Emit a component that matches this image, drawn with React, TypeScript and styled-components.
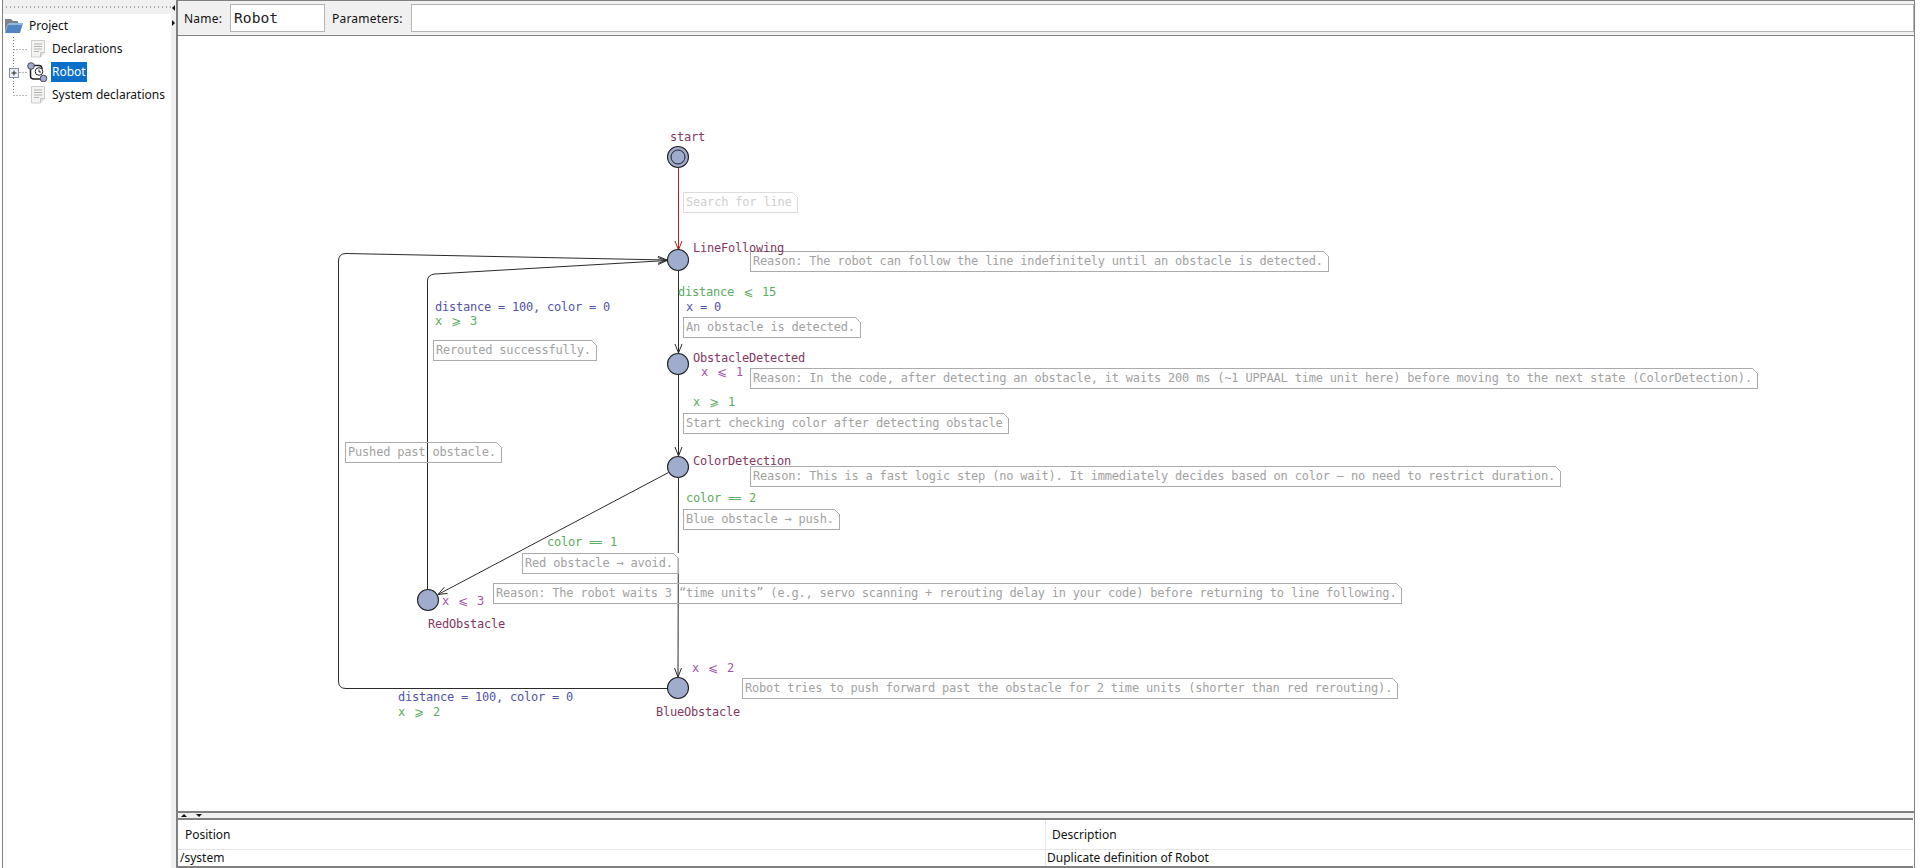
import styled, { createGlobalStyle } from "styled-components";

const FRAME = "#808080";
const PANEL = "#f0f0f0";
const UI_FONT = '"Noto Sans", "Open Sans", sans-serif';
const MONO_FONT = '"DejaVu Sans Mono", "Liberation Mono", monospace';

const CANVAS_X = 178;
const CANVAS_Y = 36;
const CANVAS_W = 1736;
const CANVAS_H = 775;

type Tone = "name" | "guard" | "update" | "invariant";

const TONES: Record<Tone, string> = {
  name: "#83395f",
  guard: "#5dab60",
  update: "#5353a8",
  invariant: "#a354a8",
};

const LOCATIONS = [
  { x: 678, y: 157 },
  { x: 678, y: 260 },
  { x: 678, y: 364 },
  { x: 678, y: 467 },
  { x: 428, y: 600 },
  { x: 678, y: 688 },
];

const LABELS: { x: number; y: number; tone: Tone; text: string }[] = [
  { x: 670, y: 137, tone: "name", text: "start" },
  { x: 693, y: 248, tone: "name", text: "LineFollowing" },
  { x: 693, y: 358, tone: "name", text: "ObstacleDetected" },
  { x: 693, y: 461, tone: "name", text: "ColorDetection" },
  { x: 428, y: 624, tone: "name", text: "RedObstacle" },
  { x: 656, y: 712, tone: "name", text: "BlueObstacle" },
  { x: 678, y: 292, tone: "guard", text: "distance ⩽ 15" },
  { x: 686, y: 307, tone: "update", text: "x = 0" },
  { x: 701, y: 372, tone: "invariant", text: "x ⩽ 1" },
  { x: 693, y: 402, tone: "guard", text: "x ⩾ 1" },
  { x: 686, y: 498, tone: "guard", text: "color == 2" },
  { x: 547, y: 542, tone: "guard", text: "color == 1" },
  { x: 442, y: 601, tone: "invariant", text: "x ⩽ 3" },
  { x: 692, y: 668, tone: "invariant", text: "x ⩽ 2" },
  { x: 435, y: 307, tone: "update", text: "distance = 100, color = 0" },
  { x: 435, y: 321, tone: "guard", text: "x ⩾ 3" },
  { x: 398, y: 697, tone: "update", text: "distance = 100, color = 0" },
  { x: 398, y: 712, tone: "guard", text: "x ⩾ 2" },
];

const NOTES: { x: number; y: number; faint?: boolean; text: string }[] = [
  { x: 683, y: 192, faint: true, text: "Search for line" },
  { x: 750, y: 251, text: "Reason: The robot can follow the line indefinitely until an obstacle is detected." },
  { x: 683, y: 317, text: "An obstacle is detected." },
  { x: 750, y: 368, text: "Reason: In the code, after detecting an obstacle, it waits 200 ms (~1 UPPAAL time unit here) before moving to the next state (ColorDetection)." },
  { x: 683, y: 413, text: "Start checking color after detecting obstacle" },
  { x: 750, y: 466, text: "Reason: This is a fast logic step (no wait). It immediately decides based on color — no need to restrict duration." },
  { x: 683, y: 509, text: "Blue obstacle → push." },
  { x: 522, y: 553, text: "Red obstacle → avoid." },
  { x: 493, y: 583, text: "Reason: The robot waits 3 “time units” (e.g., servo scanning + rerouting delay in your code) before returning to line following." },
  { x: 742, y: 678, text: "Robot tries to push forward past the obstacle for 2 time units (shorter than red rerouting)." },
  { x: 433, y: 340, text: "Rerouted successfully." },
  { x: 345, y: 442, text: "Pushed past obstacle." },
];

const EDGES: { d: string; tip: [number, number]; from: [number, number]; color?: string }[] = [
  { d: "M678.5 168V250", tip: [678.5, 250], from: [678.5, 168], color: "#b02222" },
  { d: "M678.5 271V353", tip: [678.5, 353], from: [678.5, 271] },
  { d: "M678.5 374V456", tip: [678.5, 456], from: [678.5, 374] },
  { d: "M678.5 477L678 677", tip: [678, 677], from: [678.5, 477] },
  { d: "M668.5 472.5L438 594.5", tip: [438, 594.5], from: [668.5, 472.5] },
  { d: "M427.5 590V281Q427.5 274.5 435 274L667 260.5", tip: [667, 260.5], from: [435, 274] },
  { d: "M667 688.5H346Q338.5 688.5 338.5 681V261Q338.5 253.5 346 253.5L667 260", tip: [667, 260], from: [346, 253.5] },
];

const GlobalStyle = createGlobalStyle`
  html, body {
    margin: 0;
    background: #fff;
    overflow: hidden;
  }
`;

const Shell = styled.div`
  display: flex;
  width: 1920px;
  height: 868px;
  padding: 0 5px 0 2px;
  box-sizing: border-box;
  font-family: ${UI_FONT};
  font-size: 12px;
  color: #111;
`;

const TreePane = styled.aside`
  width: 168px;
  border-left: 1px solid ${FRAME};
  flex: none;
`;

const DragStrip = styled.div`
  height: 14px;
  background-color: ${PANEL};
  background-image: repeating-linear-gradient(to right, #a8a8a8 0 1px, transparent 1px 4px);
  background-size: 100% 2px;
  background-position: 3px 6px;
  background-repeat: no-repeat;
`;

const TreeRow = styled.div`
  display: flex;
  align-items: center;
  height: 23px;
`;

const RootIcon = styled.svg`
  margin: 0 4px 0 1px;
  flex: none;
`;

const Guide = styled.svg`
  flex: none;
`;

const DocGlyph = styled.svg`
  flex: none;
  margin-right: 5px;
`;

const TemplateGlyph = styled.svg`
  flex: none;
  margin: 0 3px 0 -3px;
`;

const TreeLabel = styled.span<{ $selected?: boolean }>`
  padding: 0 1px;
  line-height: 20px;
  background: ${(p) => (p.$selected ? "#0a6fc8" : "transparent")};
  color: ${(p) => (p.$selected ? "#fff" : "#111")};
`;

const Splitter = styled.div`
  position: relative;
  width: 5px;
  flex: none;
  background: ${PANEL};
`;

const Nub = styled.i<{ $top: number; $dir: "left" | "right" }>`
  position: absolute;
  top: ${(p) => p.$top}px;
  left: 1px;
  width: 0;
  height: 0;
  border-top: 3px solid transparent;
  border-bottom: 3px solid transparent;
  border-${(p) => (p.$dir === "left" ? "right" : "left")}: 3px solid #111;
`;

const Workspace = styled.main`
  flex: 1;
  min-width: 0;
  display: flex;
  flex-direction: column;
  border-left: 2px solid ${FRAME};
  border-right: 1px solid ${FRAME};
`;

const Toolbar = styled.div`
  display: flex;
  align-items: center;
  height: 34px;
  flex: none;
  border-top: 1px solid ${FRAME};
  border-bottom: 1px solid ${FRAME};
  background: ${PANEL};
  padding: 0 0 0 6px;
`;

const FieldLabel = styled.label`
  letter-spacing: 0.2px;
`;

const FieldBox = styled.div<{ $grow?: boolean }>`
  box-sizing: border-box;
  height: 28px;
  width: ${(p) => (p.$grow ? "auto" : "95px")};
  flex: ${(p) => (p.$grow ? 1 : "none")};
  margin: 0 ${(p) => (p.$grow ? "0" : "7px")} 0 8px;
  padding-left: 3px;
  background: #fff;
  border: 1px solid #b4b4b4;
  font-family: ${MONO_FONT};
  font-size: 14.6px;
  line-height: 25px;
  color: #222;
`;

const Canvas = styled.section`
  position: relative;
  flex: 1;
  min-height: 0;
  background: #fff;
  overflow: hidden;
  border-bottom: 2px solid ${FRAME};
`;

const Wires = styled.svg`
  position: absolute;
  top: 0;
  left: 0;
`;

const Label = styled.span<{ $x: number; $y: number; $tone: Tone }>`
  position: absolute;
  left: ${(p) => p.$x - CANVAS_X}px;
  top: ${(p) => p.$y - CANVAS_Y - 7}px;
  font-family: ${MONO_FONT};
  font-size: 12px;
  letter-spacing: -0.22px;
  line-height: 14px;
  white-space: pre;
  color: ${(p) => TONES[p.$tone]};
`;

const Relation = styled.span`
  display: inline-block;
  width: 14px;
  text-align: center;
  font-family: "DejaVu Sans", sans-serif;
`;

const DoubleEquals = styled.span`
  display: inline-block;
  width: 14px;
  letter-spacing: -1px;
`;

const Note = styled.div<{ $x: number; $y: number; $faint?: boolean }>`
  position: absolute;
  left: ${(p) => p.$x - CANVAS_X}px;
  top: ${(p) => p.$y - CANVAS_Y}px;
  box-sizing: border-box;
  height: 21px;
  padding: 0 5px 0 2px;
  border: 1px solid ${(p) => (p.$faint ? "#dcdcdc" : "#ababab")};
  font-family: ${MONO_FONT};
  font-size: 12px;
  letter-spacing: -0.19px;
  line-height: 19px;
  white-space: pre;
  color: ${(p) => (p.$faint ? "#cfcfcf" : "#a2a2a2")};

  &::after {
    content: "";
    position: absolute;
    top: -1px;
    right: -1px;
    width: 6px;
    height: 6px;
    background: linear-gradient(
      to top right,
      transparent 44%,
      ${(p) => (p.$faint ? "#dcdcdc" : "#ababab")} 44% 56%,
      #fff 56%
    );
  }
`;

const ResizeBar = styled.div`
  position: relative;
  height: 5px;
  flex: none;
  background: ${PANEL};
`;

const Caret = styled.i<{ $left: number; $up?: boolean }>`
  position: absolute;
  left: ${(p) => p.$left}px;
  top: 1px;
  width: 0;
  height: 0;
  border-left: 3.5px solid transparent;
  border-right: 3.5px solid transparent;
  border-${(p) => (p.$up ? "bottom" : "top")}: 3.5px solid #111;
`;

const Problems = styled.div`
  flex: none;
  display: grid;
  grid-template-columns: 867px 1fr;
  grid-template-rows: 30px 16px;
  border-top: 2px solid ${FRAME};
  border-bottom: 2px solid ${FRAME};
  margin-right: 1px;
`;

const HeadCell = styled.div<{ $divider?: boolean }>`
  display: flex;
  align-items: center;
  padding-left: ${(p) => (p.$divider ? "6px" : "7px")};
  border-bottom: 1px solid #e6e6e6;
  border-left: ${(p) => (p.$divider ? "1px solid #e6e6e6" : "none")};
`;

const BodyCell = styled.div<{ $divider?: boolean }>`
  display: flex;
  align-items: center;
  padding-left: ${(p) => (p.$divider ? "1px" : "2px")};
  line-height: 16px;
  border-left: ${(p) => (p.$divider ? "1px solid #e6e6e6" : "none")};
`;

function FolderIcon() {
  return (
    <RootIcon width="20" height="16" viewBox="0 0 20 16">
      <path d="M1 1h6l2 2h5v3H4L1 14z" fill="#7f8389" />
      <path d="M1 15L4.500 5H19l-3 10z" fill="#4f86c0" />
      <path d="M4.500 5H19l-.7 2H3.800z" fill="#8fb7e2" />
    </RootIcon>
  );
}

function DocIcon() {
  return (
    <DocGlyph width="16" height="18" viewBox="0 0 16 18">
      <path d="M1.500.5h13v12l-4 4.500h-9z" fill="#f3f3f1" stroke="#cdcdcd" />
      <path d="M10.500 17v-4.500h4" fill="#e2e2e2" stroke="#c4c4c4" />
      <path d="M4 4h8M4 6.500h8M4 9h8M4 11.500h5" stroke="#b4b4b4" />
    </DocGlyph>
  );
}

function TemplateIcon() {
  return (
    <TemplateGlyph width="21" height="20" viewBox="0 0 21 20">
      <path d="M6 3.500h6q3 0 3 3.500M3.500 7v7q0 3 3.500 3h7" fill="none" stroke="#222" strokeWidth="1.500" />
      <circle cx="12" cy="9.500" r="3.800" fill="#fff" stroke="#222" />
      <path d="M12 7.500v2.500h2" fill="none" stroke="#222" />
      <circle cx="4" cy="4" r="3.300" fill="#a0acce" stroke="#4a4a55" />
      <circle cx="16.500" cy="16.500" r="3.300" fill="#a0acce" stroke="#4a4a55" />
    </TemplateGlyph>
  );
}

function TreeGuide({ last, expander }: { last?: boolean; expander?: boolean }) {
  return (
    <Guide width="27" height="23" viewBox="0 0 27 23">
      <path
        d={`M10.500 0V${last ? 12 : 23}M10.500 12.500H24`}
        stroke="#777"
        strokeDasharray="1 2"
        fill="none"
      />
      {expander && (
        <>
          <rect x="6.500" y="8.500" width="9" height="9" fill="#eef2f8" stroke="#7f8ea3" />
          <path d="M8.500 13h5M11 10.500v5" stroke="#222" />
        </>
      )}
    </Guide>
  );
}

function Arrowhead({ tip, from }: { tip: [number, number]; from: [number, number] }) {
  const angle = Math.atan2(tip[1] - from[1], tip[0] - from[0]);
  const point = (back: number, side: number) => {
    const x = tip[0] - back * Math.cos(angle) - side * Math.sin(angle);
    const y = tip[1] - back * Math.sin(angle) + side * Math.cos(angle);
    return `${x} ${y}`;
  };
  return (
    <path d={`M${point(9, -3.5)}L${tip[0]} ${tip[1]}L${point(9, 3.5)}`} fill="none" />
  );
}

function labelParts(text: string) {
  return text.split(/(⩽|⩾|==)/).map((part, i) => {
    if (i % 2 === 0) return part;
    return part === "==" ? (
      <DoubleEquals key={i}>{part}</DoubleEquals>
    ) : (
      <Relation key={i}>{part}</Relation>
    );
  });
}

export default function App() {
  return (
    <>
      <GlobalStyle />
      <Shell>
        <TreePane>
          <DragStrip />
          <TreeRow>
            <FolderIcon />
            <TreeLabel>Project</TreeLabel>
          </TreeRow>
          <TreeRow>
            <TreeGuide />
            <DocIcon />
            <TreeLabel>Declarations</TreeLabel>
          </TreeRow>
          <TreeRow>
            <TreeGuide expander />
            <TemplateIcon />
            <TreeLabel $selected>Robot</TreeLabel>
          </TreeRow>
          <TreeRow>
            <TreeGuide last />
            <DocIcon />
            <TreeLabel>System declarations</TreeLabel>
          </TreeRow>
        </TreePane>
        <Splitter>
          <Nub $top={5} $dir="left" />
          <Nub $top={20} $dir="right" />
        </Splitter>
        <Workspace>
          <Toolbar>
            <FieldLabel>Name:</FieldLabel>
            <FieldBox>Robot</FieldBox>
            <FieldLabel>Parameters:</FieldLabel>
            <FieldBox $grow />
          </Toolbar>
          <Canvas>
            <Wires
              width={CANVAS_W}
              height={CANVAS_H}
              viewBox={`${CANVAS_X} ${CANVAS_Y} ${CANVAS_W} ${CANVAS_H}`}
            >
              {EDGES.map((edge) => (
                <g key={edge.d} stroke={edge.color ?? "#2a2a2a"} strokeWidth="1" fill="none">
                  <path d={edge.d} />
                  <Arrowhead tip={edge.tip} from={edge.from} />
                </g>
              ))}
              {LOCATIONS.map((loc) => (
                <circle key={loc.y} cx={loc.x} cy={loc.y} r="10.500" fill="#a0acce" stroke="#222" strokeWidth="1.100" />
              ))}
              <circle cx={678} cy={157} r="7" fill="none" stroke="#222" strokeWidth="1" />
            </Wires>
            {NOTES.map((note) => (
              <Note key={note.text} $x={note.x} $y={note.y} $faint={note.faint}>
                {note.text}
              </Note>
            ))}
            {LABELS.map((label) => (
              <Label key={`${label.x}-${label.y}`} $x={label.x} $y={label.y} $tone={label.tone}>
                {labelParts(label.text)}
              </Label>
            ))}
          </Canvas>
          <ResizeBar>
            <Caret $left={3} $up />
            <Caret $left={18} />
          </ResizeBar>
          <Problems>
            <HeadCell>Position</HeadCell>
            <HeadCell $divider>Description</HeadCell>
            <BodyCell>/system</BodyCell>
            <BodyCell $divider>Duplicate definition of Robot</BodyCell>
          </Problems>
        </Workspace>
      </Shell>
    </>
  );
}
